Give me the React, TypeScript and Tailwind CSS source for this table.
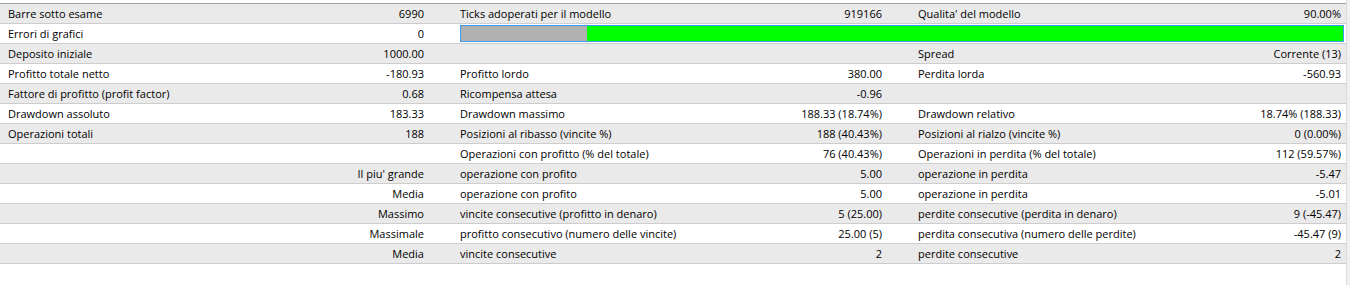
type Row = {
  cells: [string, string][];
  gray: boolean;
  bar?: boolean;
};

const rows: Row[] = [
  { gray: true, cells: [["Barre sotto esame", "6990"], ["Ticks adoperati per il modello", "919166"], ["Qualita' del modello", "90.00%"]] },
  { gray: false, bar: true, cells: [["Errori di grafici", "0"]] },
  { gray: true, cells: [["Deposito iniziale", "1000.00"], ["", ""], ["Spread", "Corrente (13)"]] },
  { gray: false, cells: [["Profitto totale netto", "-180.93"], ["Profitto lordo", "380.00"], ["Perdita lorda", "-560.93"]] },
  { gray: true, cells: [["Fattore di profitto (profit factor)", "0.68"], ["Ricompensa attesa", "-0.96"], ["", ""]] },
  { gray: false, cells: [["Drawdown assoluto", "183.33"], ["Drawdown massimo", "188.33 (18.74%)"], ["Drawdown relativo", "18.74% (188.33)"]] },
  { gray: true, cells: [["Operazioni totali", "188"], ["Posizioni al ribasso (vincite %)", "188 (40.43%)"], ["Posizioni al rialzo (vincite %)", "0 (0.00%)"]] },
  { gray: false, cells: [["", ""], ["Operazioni con profitto (% del totale)", "76 (40.43%)"], ["Operazioni in perdita (% del totale)", "112 (59.57%)"]] },
  { gray: true, cells: [["", "Il piu' grande"], ["operazione con profito", "5.00"], ["operazione in perdita", "-5.47"]] },
  { gray: false, cells: [["", "Media"], ["operazione con profito", "5.00"], ["operazione in perdita", "-5.01"]] },
  { gray: true, cells: [["", "Massimo"], ["vincite consecutive (profitto in denaro)", "5 (25.00)"], ["perdite consecutive (perdita in denaro)", "9 (-45.47)"]] },
  { gray: false, cells: [["", "Massimale"], ["profitto consecutivo (numero delle vincite)", "25.00 (5)"], ["perdita consecutiva (numero delle perdite)", "-45.47 (9)"]] },
  { gray: true, cells: [["", "Media"], ["vincite consecutive", "2"], ["perdite consecutive", "2"]] },
];

const widths = ["w-[452px] pr-[28px]", "w-[458px] pr-[28px]", "flex-1 pr-[5px]"];

function Cell({ label, value, w }: { label: string; value: string; w: string }) {
  return (
    <div className={`flex h-full items-center justify-between pl-2 ${w}`}>
      <span className="whitespace-nowrap">{label}</span>
      <span className="whitespace-nowrap">{value}</span>
    </div>
  );
}

export default function App() {
  return (
    <div
      className="flex h-[285px] w-[1350px] bg-white text-[11px] leading-none text-black"
      style={{ fontFamily: '"Open Sans", "Liberation Sans", Arial, sans-serif' }}
    >
      <div className="flex-1 pt-[3px]">
        <div className="border-t border-[#a0a0a0]">
          {rows.map((r, i) => (
            <div
              key={i}
              className={`flex h-[20px] border-b border-[#cdcdcd] ${r.gray ? "bg-[#eaeaea]" : "bg-white"}`}
            >
              {r.bar ? (
                <>
                  <Cell label={r.cells[0][0]} value={r.cells[0][1]} w={widths[0]} />
                  <div className="flex flex-1 items-center pl-2 pr-[2px]">
                    <div className="flex h-[17px] w-full border border-[#3c9cf0]">
                      <div className="w-[126px] bg-[#b0b0b0]" />
                      <div className="flex-1 bg-[#00ff00]" />
                    </div>
                  </div>
                </>
              ) : (
                r.cells.map(([l, v], j) => <Cell key={j} label={l} value={v} w={widths[j]} />)
              )}
            </div>
          ))}
        </div>
      </div>
      <div className="w-[4px] border-l border-[#dcdcdc] bg-[#f0f0f0]" />
    </div>
  );
}
